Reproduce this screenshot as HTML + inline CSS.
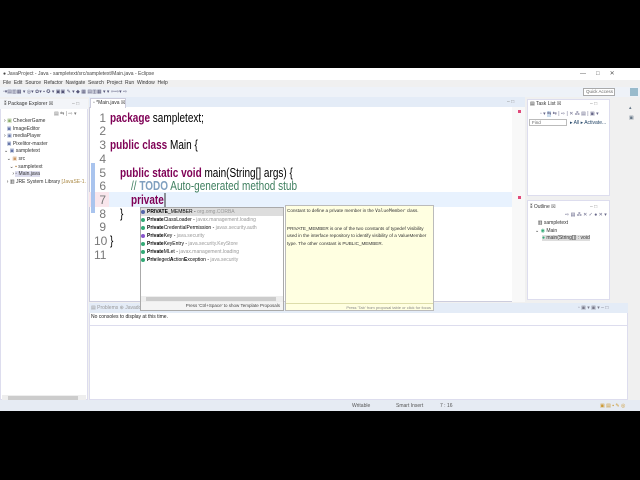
<!DOCTYPE html>
<html><head><style>
*{margin:0;padding:0;box-sizing:border-box}
body{width:640px;height:480px;background:#000;position:relative;overflow:hidden;font-family:"Liberation Sans",sans-serif;}
.a{position:absolute}
.s{font-size:5px;color:#333;white-space:nowrap}
.code{font-family:"Liberation Sans",sans-serif;font-size:12.5px;color:#000;white-space:nowrap;position:absolute;left:110px;transform:scaleX(0.8);transform-origin:0 0}
.kw{color:#7f0055;font-weight:bold}
.ln{position:absolute;left:94px;width:12px;text-align:right;font-size:12px;color:#787878}
.pi{font-size:5px;white-space:nowrap;position:absolute;left:3px}
.pi b{font-weight:bold}
.pi span{color:#999}
.ic{display:inline-block;width:4px;height:4px;border-radius:50%;background:#3a7;margin-right:2px;vertical-align:middle}
</style></head><body>
<div class="a" style="left:0;top:68px;width:640px;height:343px;background:#f0f0f0"></div>
<div class="a" style="left:0;top:68px;width:640px;height:12px;background:#fff"></div>
<div class="a s" style="left:3px;top:71px;color:#444">● JavaProject - Java - sampletext/src/sampletext/Main.java - Eclipse</div>
<div class="a s" style="left:580px;top:70px;font-size:6px;color:#555">—&nbsp;&nbsp;&nbsp;&nbsp;&nbsp;&nbsp;□&nbsp;&nbsp;&nbsp;&nbsp;&nbsp;&nbsp;✕</div>
<div class="a s" style="left:3px;top:80px">File&nbsp; Edit&nbsp; Source&nbsp; Refactor&nbsp; Navigate&nbsp; Search&nbsp; Project&nbsp; Run&nbsp; Window&nbsp; Help</div>
<div class="a" style="left:0;top:87px;width:640px;height:10px;background:#eef2f8"></div>
<div class="a s" style="left:3px;top:89px;color:#557">▫▾▤▥▦ ▾ ◎▾ ✿▾ ▪ ✪ ▾ ▣▣ ✎ ▾ ◆ ▦ ▤▥▦ ▾ ▾ ⇦⇨▾ ⇨</div>
<div class="a" style="left:583px;top:88px;width:32px;height:8px;border:1px solid #aaa;background:#fff;font-size:4.5px;color:#666;padding-left:2px;line-height:6px">Quick Access</div>
<div class="a" style="left:630px;top:88px;width:8px;height:8px;background:#9bc"></div>
<div class="a" style="left:0;top:99px;width:88px;height:301px;background:#fff;border:1px solid #dde"></div>
<div class="a" style="left:0;top:99px;width:88px;height:10px;background:#f3f5f9"></div>
<div class="a s" style="left:4px;top:101px">⁑ Package Explorer ☒</div>
<div class="a s" style="left:72px;top:101px;color:#888">– □</div>
<div class="a s" style="left:54px;top:111px;color:#777">▤ ⇆ | ⇨ ▾</div>
<div class="a s" style="left:4px;top:118px;line-height:7.6px">› <span style="color:#8a6">▣</span> CheckerGame<br>&nbsp; <span style="color:#67a">▣</span> ImageEditor<br>› <span style="color:#67a">▣</span> mediaPlayer<br>&nbsp; <span style="color:#67a">▣</span> Pixelitor-master<br>⌄ <span style="color:#67a">▣</span> sampletext<br>&nbsp; ⌄ <span style="color:#c96">▣</span> src<br>&nbsp;&nbsp;&nbsp; ⌄ <span style="color:#a73">▪</span> sampletext<br>&nbsp;&nbsp;&nbsp;&nbsp;&nbsp; › <span style="background:#dde">▫ Main.java</span><br>&nbsp; › ▥ JRE System Library <span style="color:#a84">[JavaSE-1.</span></div>
<div class="a" style="left:2px;top:395px;width:84px;height:6px;background:#eee"></div>
<div class="a" style="left:8px;top:396px;width:70px;height:4px;background:#ccc"></div>
<div class="a" style="left:89px;top:97px;width:436px;height:205px;background:#fff;border:1px solid #ccd"></div>
<div class="a" style="left:89px;top:97px;width:436px;height:10px;background:#e4ecf7"></div>
<div class="a" style="left:90px;top:98px;width:36px;height:10px;background:#fff;border:1px solid #ccd;border-bottom:none"></div>
<div class="a s" style="left:93px;top:100px">▫ *Main.java ☒</div>
<div class="a s" style="left:507px;top:99px;color:#888">– □</div>
<div class="a" style="left:89px;top:192px;width:424px;height:15px;background:#e8f2fe"></div>
<div class="a" style="left:89px;top:192px;width:20px;height:15px;background:#f9e6ec"></div>
<div class="a" style="left:91px;top:163px;width:4px;height:50px;background:#a9c4ee"></div>
<div class="a" style="left:512px;top:107px;width:13px;height:195px;background:#f8f8f8"></div>
<div class="a" style="left:518px;top:110px;width:3px;height:3px;background:#e04a7a"></div>
<div class="a" style="left:518px;top:196px;width:3px;height:3px;background:#e04a7a"></div>
<div class="ln" style="top:111px">1</div><div class="ln" style="top:124px">2</div><div class="ln" style="top:138px">3</div><div class="ln" style="top:152px">4</div><div class="ln" style="top:166px">5</div><div class="ln" style="top:179px">6</div><div class="ln" style="top:193px">7</div><div class="ln" style="top:207px">8</div><div class="ln" style="top:220px">9</div><div class="ln" style="top:234px">10</div><div class="ln" style="top:248px">11</div>
<div class="code" style="top:111px"><span class="kw">package</span> sampletext;</div>
<div class="code" style="top:138px"><span class="kw">public class</span> Main {</div>
<div class="code" style="top:166px;left:120px"><span class="kw">public static void</span> main(String[] args) {</div>
<div class="code" style="top:179px;left:131px;color:#3f7f5f">// <b style="color:#7f9fbf">TODO</b> Auto-generated method stub</div>
<div class="code" style="top:193px;left:131px"><span class="kw">private</span><span style="border-left:1px solid #000;margin-left:1px"></span></div>
<div class="code" style="top:207px;left:120px">}</div>
<div class="code" style="top:234px">}</div>
<div class="a" style="left:527px;top:99px;width:83px;height:97px;background:#fff;border:1px solid #dde"></div>
<div class="a s" style="left:530px;top:101px">▤ Task List ☒</div>
<div class="a s" style="left:590px;top:101px;color:#888">– □</div>
<div class="a s" style="left:540px;top:111px;color:#668">▫ ▾ <span style="background:#cde">⇆</span> ⇆ | ⇨ | ✕ ⁂ ▤ | ▣ ▾</div>
<div class="a" style="left:529px;top:119px;width:38px;height:7px;border:1px solid #bbb;font-size:4.5px;color:#666;padding-left:2px;line-height:5px">Find</div>
<div class="a s" style="left:570px;top:120px;color:#246">▸ All ▸ Activate...</div>
<div class="a" style="left:527px;top:200px;width:83px;height:100px;background:#fff;border:1px solid #dde"></div>
<div class="a s" style="left:530px;top:204px">⁑ Outline ☒</div>
<div class="a s" style="left:590px;top:204px;color:#888">– □</div>
<div class="a s" style="left:565px;top:212px;color:#668">⇨ ▤ ⁂ ✕ ✓ ● ✕ ▾</div>
<div class="a s" style="left:535px;top:220px;line-height:7.7px">&nbsp;&nbsp;▥ sampletext<br>⌄ <span style="color:#3a7">◉</span> Main<br>&nbsp;&nbsp;&nbsp;&nbsp;&nbsp;<span style="background:#ddd"><span style="color:#3a7">●</span> main(String[]) : void</span></div>
<div class="a" style="left:612px;top:99px;width:28px;height:300px;background:#f0f0f0"></div>
<div class="a s" style="left:629px;top:103px;color:#678;line-height:10px">▴<br>▣</div>
<div class="a" style="left:89px;top:303px;width:539px;height:97px;background:#fff;border:1px solid #dde"></div>
<div class="a" style="left:89px;top:303px;width:539px;height:10px;background:#e4ecf7"></div>
<div class="a s" style="left:91px;top:305px;color:#999">▤ Problems ⊕ Javadoc</div>
<div class="a s" style="left:578px;top:305px;color:#778">▫ ▣ ▾ ▣ ▾ – □</div>
<div class="a s" style="left:91px;top:314px;color:#222">No consoles to display at this time.</div>
<div class="a" style="left:90px;top:325px;width:537px;height:1px;background:#dde"></div>
<div class="a" style="left:0;top:400px;width:640px;height:11px;background:#e6ebf3"></div>
<div class="a s" style="left:352px;top:403px;color:#555">Writable</div>
<div class="a s" style="left:396px;top:403px;color:#555">Smart Insert</div>
<div class="a s" style="left:440px;top:403px;color:#555">7 : 16</div>
<div class="a s" style="left:600px;top:403px;color:#c93">▣ ▤ ▪ ✎ ◎</div>
<div class="a" style="left:140px;top:207px;width:144px;height:104px;background:#fff;border:1px solid #aaa"></div>
<div class="a" style="left:141px;top:208px;width:142px;height:8px;background:#ddd"></div>
<div class="pi" style="left:141px;top:209px"><span class="ic" style="background:#56a"></span><b>PRIVATE</b>_MEMBER - <span>org.omg.CORBA</span></div>
<div class="pi" style="left:141px;top:217px"><span class="ic"></span><b>Private</b>ClassLoader - <span>javax.management.loading</span></div>
<div class="pi" style="left:141px;top:225px"><span class="ic"></span><b>Private</b>CredentialPermission - <span>javax.security.auth</span></div>
<div class="pi" style="left:141px;top:233px"><span class="ic" style="background:#85c"></span><b>Private</b>Key - <span>java.security</span></div>
<div class="pi" style="left:141px;top:241px"><span class="ic"></span><b>Private</b>KeyEntry - <span>java.security.KeyStore</span></div>
<div class="pi" style="left:141px;top:249px"><span class="ic"></span><b>Private</b>MLet - <span>javax.management.loading</span></div>
<div class="pi" style="left:141px;top:257px"><span class="ic"></span><b>Priv</b>ileged<b>A</b>ction<b>E</b>xception - <span>java.security</span></div>
<div class="a" style="left:141px;top:296px;width:142px;height:6px;background:#eee"></div>
<div class="a" style="left:146px;top:297px;width:130px;height:4px;background:#ccc"></div>
<div class="a" style="left:141px;top:302px;width:142px;height:8px;background:#f4f4f4;font-size:4.5px;color:#444;text-align:right;padding-right:3px;line-height:8px">Press 'Ctrl+Space' to show Template Proposals</div>
<div class="a" style="left:285px;top:205px;width:149px;height:106px;background:#ffffe1;border:1px solid #bbb"></div>
<div class="a" style="left:287px;top:207px;width:145px;font-size:4.6px;color:#333;line-height:7.6px">Constant to define a private member in the <code>ValueMember</code> class.<br><span style="line-height:9px">&nbsp;</span><br>PRIVATE_MEMBER is one of the two constants of typedef Visibility used in the interface repository to identify visibility of a ValueMember type. The other constant is PUBLIC_MEMBER.</div>
<div class="a" style="left:286px;top:303px;width:147px;height:7px;border-top:1px solid #dda;font-size:4px;color:#888;text-align:right;padding-right:2px;line-height:7px">Press 'Tab' from proposal table or click for focus</div>
</body></html>
